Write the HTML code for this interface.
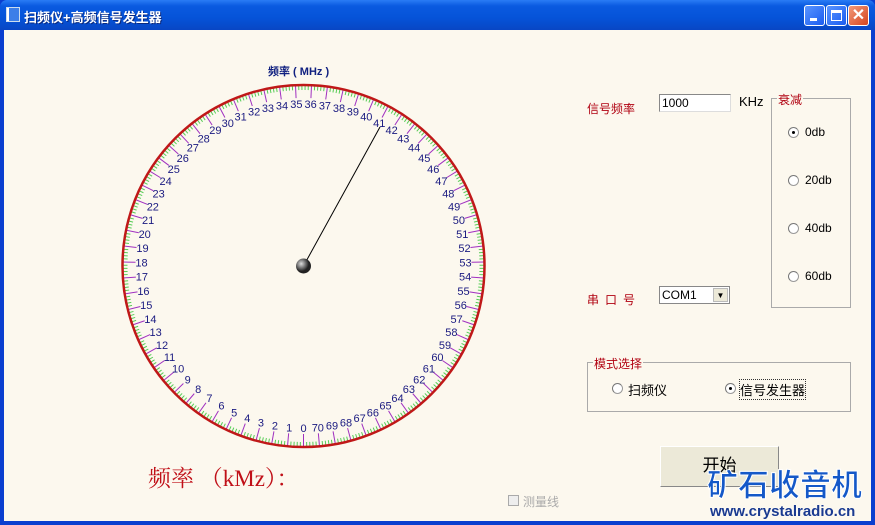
<!DOCTYPE html>
<html><head><meta charset="utf-8"><style>
*{margin:0;padding:0;box-sizing:border-box}
body{width:875px;height:525px;overflow:hidden;background:#0a3ecf;font-family:"Liberation Sans","Noto Sans CJK SC",sans-serif;position:relative}
.tb{position:absolute;left:0;top:0;width:875px;height:30px;background:linear-gradient(#2a7cf5,#0a5ae0 20%,#0553d8 60%,#0846c4);border-radius:7px 7px 0 0}
.tt{position:absolute;left:24px;top:7px;color:#fff;font-size:13px;font-weight:bold;text-shadow:1px 1px #0a2a80}
.ic{position:absolute;left:6px;top:7px;width:14px;height:15px;border:1px solid #cde;background:linear-gradient(90deg,#fff 2px,#3c7ee8 2px)}
.bt{position:absolute;top:5px;width:21px;height:21px;border:1px solid #fff;border-radius:3px;background:linear-gradient(135deg,#5a95ff,#1a5cf0)}
.cl{background:linear-gradient(135deg,#f29a7a,#d5451e)}
.cont{position:absolute;left:4px;top:30px;width:867px;height:491px;background:#fcf8ee}
.a{position:absolute;font-size:12px;white-space:nowrap}
.r{color:#b00010}
.rad{position:absolute;width:11px;height:11px;border-radius:50%;border:1px solid #999;border-left-color:#777;border-top-color:#777;background:#fff}
.rad.on:after{content:"";position:absolute;left:3px;top:3px;width:3px;height:3px;background:#000;border-radius:50%}
.grp{position:absolute;border:1px solid #aaa}
</style></head><body>
<div class="tb"><div class="ic"></div><div class="tt">扫频仪+高频信号发生器</div>
<div class="bt" style="left:804px"><div style="position:absolute;left:5px;top:12px;width:7px;height:3px;background:#fff"></div></div>
<div class="bt" style="left:826px"><div style="position:absolute;left:4px;top:4px;width:11px;height:11px;border:1px solid #fff;border-top-width:3px"></div></div>
<div class="bt cl" style="left:848px;color:#fff;font-size:16px;text-align:center;line-height:19px;font-weight:bold">✕</div>
</div>
<div class="cont"></div>
<svg id="d" width="875" height="525" style="position:absolute;left:0;top:0"></svg>
<div class="a" style="left:268px;top:63px;color:#102080;font-size:11px;font-weight:bold">频率 ( MHz )</div>
<div class="a r" style="left:587px;top:100px">信号频率</div>
<div style="position:absolute;left:659px;top:94px;width:72px;height:18px;background:#fff;border:1px solid #888;border-right-color:#ddd;border-bottom-color:#ddd;font-size:12px;padding:1px 2px">1000</div>
<div class="a" style="left:739px;top:94px;font-size:13px">KHz</div>
<div class="grp" style="left:771px;top:98px;width:80px;height:210px"></div>
<div class="a r" style="left:777px;top:91px;background:#fcf8ee;padding:0 1px">衰减</div>
<div class="rad on" style="left:788px;top:127px"></div><div class="a" style="left:805px;top:125px">0db</div>
<div class="rad" style="left:788px;top:175px"></div><div class="a" style="left:805px;top:173px">20db</div>
<div class="rad" style="left:788px;top:223px"></div><div class="a" style="left:805px;top:221px">40db</div>
<div class="rad" style="left:788px;top:271px"></div><div class="a" style="left:805px;top:269px">60db</div>
<div class="a r" style="left:587px;top:291px;letter-spacing:6px">串口号</div>
<div style="position:absolute;left:659px;top:286px;width:71px;height:18px;background:#fff;border:1px solid #888;font-size:12px;padding:1px 2px">COM1<div style="position:absolute;right:1px;top:1px;width:15px;height:14px;background:#ece9d8;border:1px solid #bbb;font-size:8px;text-align:center;line-height:13px">▼</div></div>
<div class="grp" style="left:587px;top:362px;width:264px;height:50px"></div>
<div class="a r" style="left:593px;top:355px;background:#fcf8ee;padding:0 1px">模式选择</div>
<div class="rad" style="left:612px;top:383px"></div><div class="a" style="left:628px;top:380px;font-size:13px">扫频仪</div>
<div class="rad on" style="left:725px;top:383px"></div><div class="a" style="left:740px;top:380px;font-size:13px;outline:1px dotted #333">信号发生器</div>
<div style="position:absolute;left:660px;top:446px;width:119px;height:41px;background:#ece9d8;border:1px solid #fff;border-right-color:#888;border-bottom-color:#888;font-size:17px;text-align:center;line-height:38px">开始</div>
<div class="a" style="left:148px;top:460px;color:#c01018;font-size:23px;font-family:'Liberation Serif','Noto Serif CJK SC',serif">频率 （kMz）：</div>
<div style="position:absolute;left:508px;top:495px;width:11px;height:11px;border:1px solid #aaa;background:#eee"></div>
<div class="a" style="left:523px;top:493px;color:#aaa">测量线</div>
<div class="a" style="left:707px;top:460px;color:#1458c8;font-size:31px;font-weight:bold;letter-spacing:0;-webkit-text-stroke:1px #fff">矿石收音机</div>
<div class="a" style="left:710px;top:503px;color:#1a3a90;font-size:15px;font-weight:bold;text-shadow:0 0 2px #fff">www.crystalradio.cn</div>
<script>
var s='',cx=303.5,cy=266,R=181,N=71;
function p(r,ph){return [cx-r*Math.sin(ph),cy+r*Math.cos(ph)]}
for(var j=0;j<N*5;j++){var ph=j*2*Math.PI/(N*5);var a=p(R,ph),b=p(j%5?R-5:R-13,ph);
s+='<line x1="'+a[0]+'" y1="'+a[1]+'" x2="'+b[0]+'" y2="'+b[1]+'" stroke="'+(j%5?'#5c5':'#a030c0')+'" stroke-width="1"/>';}
s+='<circle cx="'+cx+'" cy="'+cy+'" r="'+R+'" fill="none" stroke="#c01818" stroke-width="2.5"/>';
for(var i=0;i<N;i++){var q=p(162,i*2*Math.PI/N);s+='<text x="'+q[0]+'" y="'+(q[1]+4)+'" font-size="11" fill="#1a1a80" text-anchor="middle" font-family="Liberation Sans">'+i+'</text>';}
s+='<line x1="'+cx+'" y1="'+cy+'" x2="380" y2="127" stroke="#000"/>';
s+='<defs><radialGradient id="g" cx="35%" cy="35%"><stop offset="0" stop-color="#ddd"/><stop offset="1" stop-color="#222"/></radialGradient></defs><circle cx="'+cx+'" cy="'+cy+'" r="7.5" fill="url(#g)"/>';
document.getElementById('d').innerHTML=s;
</script>
</body></html>
